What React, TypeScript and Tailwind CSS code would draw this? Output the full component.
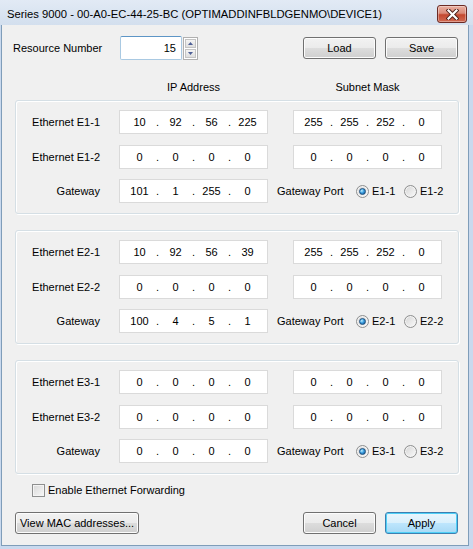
import React from "react";

function Btn({ children, w, primary }: { children: React.ReactNode; w: string; primary?: boolean }) {
  const base =
    "h-[22px] rounded-[3px] border flex items-center justify-center text-[11px] leading-[13px] shrink-0 ";
  const look = primary
    ? "border-[#3c7fb1] bg-[linear-gradient(to_bottom,#eaf6fd_0%,#d9f0fc_50%,#bee6fd_50%,#a7d9f5_100%)] shadow-[inset_0_0_0_1px_#4fd0f7]"
    : "border-[#707070] bg-[linear-gradient(to_bottom,#f2f2f2_0%,#ebebeb_50%,#dddddd_50%,#cfcfcf_100%)] shadow-[inset_0_0_0_1px_#fcfcfc]";
  return <div className={base + look + " " + w}>{children}</div>;
}

function Ip({ v, className }: { v: string[]; className: string }) {
  return (
    <div className={"w-[149px] h-[24px] bg-white border border-[#dadada] flex items-center pl-[3px] shrink-0 " + className}>
      {v.map((s, i) => (
        <React.Fragment key={i}>
          <span className="w-[33px] text-center">{s}</span>
          {i < 3 && <span className="w-[3px] text-center">.</span>}
        </React.Fragment>
      ))}
    </div>
  );
}

function Radio({ checked }: { checked?: boolean }) {
  return (
    <div className="w-[13px] h-[13px] rounded-full border border-[#8e8f8f] bg-[linear-gradient(135deg,#d4d4d4,#fbfbfb)] flex items-center justify-center shrink-0 shadow-[inset_0_0_0_1px_#f4f4f4]">
      {checked && (
        <div className="w-[7px] h-[7px] rounded-full border border-[#1b4f7f] bg-[radial-gradient(circle_at_35%_35%,#bfefff_0%,#3a9ee0_45%,#0d4a85_100%)]" />
      )}
    </div>
  );
}

function Group({ n, ip1, sm1, ip2, sm2, gw }: { n: string; ip1: string[]; sm1: string[]; ip2: string[]; sm2: string[]; gw: string[] }) {
  return (
    <div className="ml-[13px] w-[444px] h-[114px] shrink-0 border border-[#d5dfe5] rounded-[3px] shadow-[inset_1px_1px_0_#ffffff,1px_1px_0_#ffffff] flex flex-col pt-[9px]">
      <div className="h-[24px] flex items-center">
        <div className="w-[84px] text-right">Ethernet E{n}-1</div>
        <Ip v={ip1} className="ml-[19px]" />
        <Ip v={sm1} className="ml-[25px]" />
      </div>
      <div className="mt-[11px] h-[24px] flex items-center">
        <div className="w-[84px] text-right">Ethernet E{n}-2</div>
        <Ip v={ip2} className="ml-[19px]" />
        <Ip v={sm2} className="ml-[25px]" />
      </div>
      <div className="mt-[10px] h-[24px] flex items-center">
        <div className="w-[84px] text-right">Gateway</div>
        <Ip v={gw} className="ml-[19px]" />
        <div className="ml-[9px] w-[79px] whitespace-nowrap">Gateway Port</div>
        <div className="w-[48px] flex items-center">
          <Radio checked />
          <span className="ml-[3px]">E{n}-1</span>
        </div>
        <div className="flex items-center">
          <Radio />
          <span className="ml-[3px]">E{n}-2</span>
        </div>
      </div>
    </div>
  );
}

const Z = ["0", "0", "0", "0"];

export default function App() {
  return (
    <div className="w-[473px] h-[549px] flex flex-col bg-[#c9d9ee] font-['Liberation_Sans',Arial,sans-serif] text-[11px] leading-[13px] text-black overflow-hidden">
      <div className="h-[25px] shrink-0 flex items-start bg-[linear-gradient(to_bottom,#e2eaf5,#d3dfee)]">
        <div className="pl-[7px] h-[25px] flex items-center pt-[3px] text-[11.25px] leading-[14px] whitespace-nowrap">
          Series 9000 - 00-A0-EC-44-25-BC (OPTIMADDINFBLDGENMO\DEVICE1)
        </div>
        <div className="ml-auto mr-[6px] mt-[5px] w-[30px] h-[18px] rounded-[3px] border border-[#6b2a24] bg-[linear-gradient(to_bottom,#eab0a2_0%,#d98a78_45%,#c4482f_55%,#d06a52_100%)] shadow-[inset_0_0_0_1px_rgba(255,255,255,0.35)] flex items-center justify-center">
          <svg width="13" height="11" viewBox="0 0 13 11">
            <path d="M2.5 1.5 L10.5 9.5 M10.5 1.5 L2.5 9.5" stroke="#4a1e18" strokeWidth="4" strokeLinecap="square" />
            <path d="M2.5 1.5 L10.5 9.5 M10.5 1.5 L2.5 9.5" stroke="#ffffff" strokeWidth="2.2" strokeLinecap="square" />
          </svg>
        </div>
      </div>

      <div className="flex-1 ml-[1px] mr-[4px] mb-[3px] border-x border-b border-[#7f9db9] bg-[#f0f0f0] flex flex-col">
        <div className="mt-[11px] h-[24px] flex items-start shrink-0">
          <div className="ml-[11px] w-[107px] h-[24px] flex items-center">Resource Number</div>
          <div className="w-[62px] h-[24px] bg-white border border-[#a9c9e2] border-t-[#5d95c6] rounded-[2px] flex items-center justify-end pr-[5px] shrink-0">
            15
          </div>
          <div className="ml-[1px] mt-[1px] w-[15px] h-[23px] border border-[#b0b0b0] flex flex-col shrink-0 bg-white p-[1px] gap-[1px]">
            <div className="flex-1 bg-[linear-gradient(to_bottom,#f4f4f4,#dedede)] border border-[#c4c4c4] flex items-center justify-center">
              <svg width="5" height="3" viewBox="0 0 5 3"><path d="M0 3 L2.5 0 L5 3 Z" fill="#4d5f96" /></svg>
            </div>
            <div className="flex-1 bg-[linear-gradient(to_bottom,#f4f4f4,#dedede)] border border-[#c4c4c4] flex items-center justify-center">
              <svg width="5" height="3" viewBox="0 0 5 3"><path d="M0 0 L5 0 L2.5 3 Z" fill="#4d5f96" /></svg>
            </div>
          </div>
          <div className="ml-auto mt-[1px] flex gap-[9px] mr-[10px]">
            <Btn w="w-[73px]">Load</Btn>
            <Btn w="w-[73px]">Save</Btn>
          </div>
        </div>

        <div className="mt-[20px] h-[15px] flex items-center shrink-0">
          <div className="ml-[117px] w-[149px] text-center">IP Address</div>
          <div className="ml-[25px] w-[149px] text-center">Subnet Mask</div>
        </div>

        <div className="mt-[5px]">
          <Group n="1" ip1={["10", "92", "56", "225"]} sm1={["255", "255", "252", "0"]} ip2={Z} sm2={Z} gw={["101", "1", "255", "0"]} />
        </div>
        <div className="mt-[16px]">
          <Group n="2" ip1={["10", "92", "56", "39"]} sm1={["255", "255", "252", "0"]} ip2={Z} sm2={Z} gw={["100", "4", "5", "1"]} />
        </div>
        <div className="mt-[16px]">
          <Group n="3" ip1={Z} sm1={Z} ip2={Z} sm2={Z} gw={Z} />
        </div>

        <div className="mt-[9px] h-[15px] flex items-center shrink-0">
          <div className="ml-[30px] w-[13px] h-[13px] border border-[#8e8f8f] bg-[linear-gradient(135deg,#d8d8d8,#f8f8f8)] shadow-[inset_0_0_0_1px_#f4f4f4]" />
          <span className="ml-[3px]">Enable Ethernet Forwarding</span>
        </div>

        <div className="mt-[14px] h-[22px] flex items-center shrink-0">
          <div className="ml-[13px]">
            <Btn w="w-[124px]">View MAC addresses...</Btn>
          </div>
          <div className="ml-auto flex gap-[9px] mr-[10px]">
            <Btn w="w-[73px]">Cancel</Btn>
            <Btn w="w-[73px]" primary>Apply</Btn>
          </div>
        </div>
      </div>
    </div>
  );
}
